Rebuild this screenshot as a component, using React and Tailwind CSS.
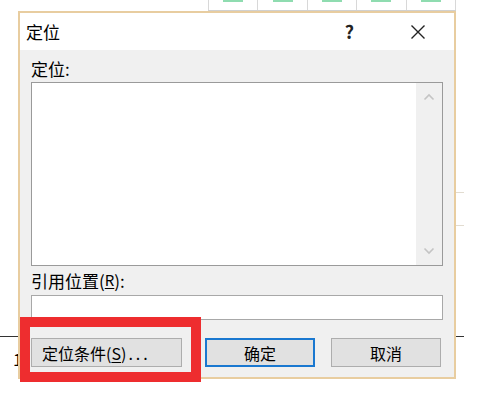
export default function App() {
  const cells = [0, 1, 2, 3, 4];
  return (
    <div className="relative w-[490px] h-[393px] overflow-hidden bg-white font-['Noto_Sans_CJK_SC','Noto_Sans',sans-serif] text-black">
      {/* spreadsheet peeking behind the dialog */}
      <div className="flex h-[11px] ml-[208px] w-[248px] border-b border-[#d0d0d0]">
        {cells.map((c) => (
          <div key={c} className="flex-1 border-l border-[#d8d8d8] last:border-r flex justify-center items-start">
            <div className="w-[20px] h-[2px] bg-[#8fdcb0]" />
          </div>
        ))}
      </div>
      <div className="absolute left-0 top-[336px] w-[20px] h-px bg-[#333]" />
      <div className="absolute left-[13px] top-[350px] text-[17px] leading-none">1</div>
      <div className="absolute left-[454px] top-[336px] w-[10px] h-px bg-[#333]" />
      <div className="absolute left-[454px] top-[192px] w-[10px] h-px bg-[#e2dcd0]" />
      <div className="absolute left-[454px] top-[225px] w-[10px] h-px bg-[#e2dcd0]" />

      {/* dialog */}
      <div className="relative ml-[18px] w-[438px] border-2 border-[#e8cda0] bg-white">
        <div className="h-[37px] flex items-center pl-[6px] text-[17px]">
          <span>定位</span>
          <span className="ml-auto mr-[56px] text-[18px] font-bold text-[#222]">?</span>
          <svg width="16" height="16" viewBox="0 0 16 16" className="mr-[28px]">
            <path d="M1.5 1.5 L14.5 14.5 M14.5 1.5 L1.5 14.5" stroke="#222" strokeWidth="1.4" />
          </svg>
        </div>
        <div className="bg-[#f0f0f0] px-[11px] pt-[8px] pb-[10px]">
          <div className="h-[24px] text-[17px] leading-[22px]">定位:</div>
          <div className="h-[184px] border border-[#9a9a9a] bg-white flex justify-end">
            <div className="w-[26px] bg-[#f0f0f0] flex flex-col items-center justify-between py-[10px]">
              <svg width="12" height="8" viewBox="0 0 12 8">
                <path d="M1.5 6.5 L6 2 L10.5 6.5" fill="none" stroke="#c4c4c4" strokeWidth="1.6" />
              </svg>
              <svg width="12" height="8" viewBox="0 0 12 8">
                <path d="M1.5 1.5 L6 6 L10.5 1.5" fill="none" stroke="#c4c4c4" strokeWidth="1.6" />
              </svg>
            </div>
          </div>
          <div className="h-[29px] flex items-center text-[17px]">
            引用位置(<span className="underline underline-offset-2 text-[15px]">R</span>):
          </div>
          <div className="h-[25px] border border-[#a8a8a8] bg-white" />
          <div className="flex mt-[18px] h-[29px] text-[16px]">
            <div className="w-[151px] border border-[#adadad] bg-[#e1e1e1] flex items-center pl-[10px]">
              定位条件(<span className="underline underline-offset-2">S</span>)<span className="tracking-[3px] ml-[2px]">...</span>
            </div>
            <div className="ml-[23px] w-[110px] border-2 border-[#1a78d0] bg-[#e1e1e1] flex items-center justify-center">
              确定
            </div>
            <div className="ml-[16px] w-[110px] border border-[#adadad] bg-[#e1e1e1] flex items-center justify-center">
              取消
            </div>
          </div>
        </div>
      </div>

      {/* red highlight */}
      <div className="absolute left-[20px] top-[317px] w-[181px] h-[65px] border-[10px] border-[#ee2d2f]" />
    </div>
  );
}
